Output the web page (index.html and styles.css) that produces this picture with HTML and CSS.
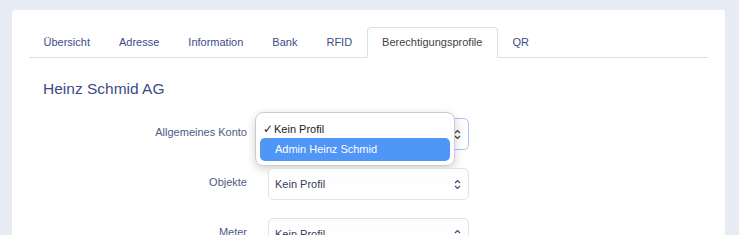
FILE: index.html
```html
<!DOCTYPE html>
<html lang="de">
<head>
    <meta charset="UTF-8">
    <title>Heinz Schmid AG - Berechtigungsprofile</title>
    <link rel="stylesheet" href="styles.css">
</head>
<body>
    <div class="card">
        <ul class="tabs">
            <li class="tab">Übersicht</li>
            <li class="tab">Adresse</li>
            <li class="tab">Information</li>
            <li class="tab">Bank</li>
            <li class="tab">RFID</li>
            <li class="tab active">Berechtigungsprofile</li>
            <li class="tab">QR</li>
        </ul>

        <div class="tab-content">
            <h2>Heinz Schmid AG</h2>

            <div class="form-row">
                <label>Allgemeines Konto</label>
                <div class="select-wrap">
                    <div class="select focused">
                        <span>Kein Profil</span>
                        <svg class="chevron" width="7" height="11" viewBox="0 0 7 11"><path d="M1 4 L3.5 1.5 L6 4 M1 7 L3.5 9.5 L6 7" fill="none" stroke="#3a3f4a" stroke-width="1.2"/></svg>
                    </div>
                    <div class="dropdown">
                        <div class="option first"><span class="check">✓</span>Kein Profil</div>
                        <div class="option selected">Admin Heinz Schmid</div>
                    </div>
                </div>
            </div>

            <div class="form-row">
                <label>Objekte</label>
                <div class="select-wrap">
                    <div class="select">
                        <span>Kein Profil</span>
                        <svg class="chevron" width="7" height="11" viewBox="0 0 7 11"><path d="M1 4 L3.5 1.5 L6 4 M1 7 L3.5 9.5 L6 7" fill="none" stroke="#3d4a78" stroke-width="1.2"/></svg>
                    </div>
                </div>
            </div>

            <div class="form-row">
                <label>Meter</label>
                <div class="select-wrap">
                    <div class="select">
                        <span>Kein Profil</span>
                        <svg class="chevron" width="7" height="11" viewBox="0 0 7 11"><path d="M1 4 L3.5 1.5 L6 4 M1 7 L3.5 9.5 L6 7" fill="none" stroke="#3d4a78" stroke-width="1.2"/></svg>
                    </div>
                </div>
            </div>
        </div>
    </div>
</body>
</html>
```

FILE: styles.css
```css
* {
    margin: 0;
    padding: 0;
    box-sizing: border-box;
    font-family: 'Liberation Sans', Arial, sans-serif;
}

body {
    background-color: #e7ecf4;
    padding: 10px 14px 0 12px;
    height: 235px;
    overflow: hidden;
}

.card {
    width: 713px;
    background: white;
    border-radius: 3px;
    padding: 17px 17px 40px;
    min-height: 260px;
}

.tabs {
    list-style: none;
    display: flex;
    border-bottom: 1px solid #dcdfe5;
    height: 31px;
}

.tab {
    padding: 0 14.5px;
    height: 30px;
    line-height: 30px;
    font-size: 11px;
    color: #3d4c88;
}

.tab.active {
    color: #444;
    background: white;
    border: 1px solid #dcdfe5;
    border-bottom-color: white;
    border-radius: 4px 4px 0 0;
    height: 31px;
    line-height: 29px;
}

.tab-content {
    padding: 21px 14px 0;
}

h2 {
    font-size: 15.5px;
    font-weight: normal;
    color: #3d4b86;
    line-height: 19px;
    margin-bottom: 20px;
}

.form-row {
    display: flex;
    gap: 21px;
    margin-bottom: 18px;
}

.form-row label {
    width: 204px;
    text-align: right;
    font-size: 11px;
    line-height: 16px;
    padding-top: 6px;
    color: #4f5a84;
}

.select-wrap {
    position: relative;
}

.select {
    width: 201px;
    height: 32px;
    border: 1px solid #e0e3ec;
    border-radius: 5px;
    display: flex;
    align-items: center;
    justify-content: space-between;
    padding: 0 7px 0 6px;
    font-size: 11px;
    color: #34405a;
    background: linear-gradient(#fdfdfe, #fff);
}

.select.focused {
    border-color: #aebff3;
}

.dropdown {
    position: absolute;
    left: -13px;
    top: -6px;
    width: 200px;
    height: 54px;
    background: rgba(255, 255, 255, 0.98);
    border: 1px solid #c9cbd0;
    border-radius: 8px;
    box-shadow: 0 3px 10px rgba(0, 0, 0, 0.18);
    padding: 7px 4px 0;
}

.option {
    height: 23px;
    line-height: 23px;
    font-size: 11px;
    color: #222;
    padding-left: 15px;
    position: relative;
    border-radius: 5px;
}

.option.first {
    height: 18px;
    line-height: 18px;
    padding-left: 14px;
}

.option .check {
    position: absolute;
    left: 3px;
    font-size: 12px;
    font-family: 'DejaVu Sans', sans-serif;
}

.option.selected {
    background: #5096f7;
    color: white;
}
```
